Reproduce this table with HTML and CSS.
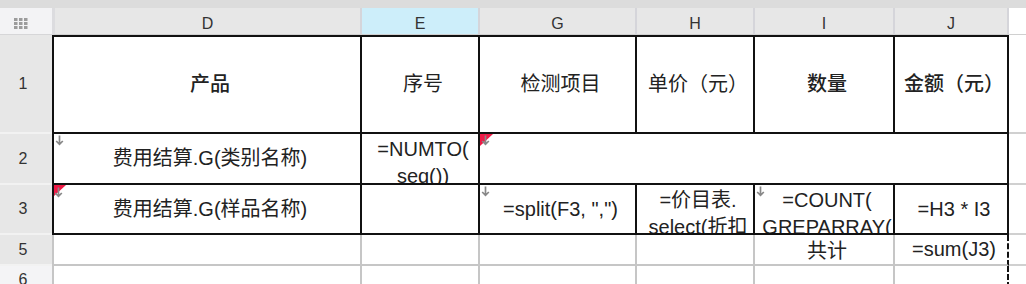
FILE: index.html
```html
<!DOCTYPE html>
<html lang="zh">
<head>
<meta charset="utf-8">
<title>Sheet</title>
<link rel="stylesheet" href="styles.css">
</head>
<body>
<div class="topbar"></div>
<div class="sheet">
  <!-- column header -->
  <div class="corner">
    <svg class="gridicon" width="14" height="11" viewBox="0 0 14 11">
      <g fill="#9c9c9c">
        <rect x="0" y="0" width="3.5" height="3"/><rect x="5" y="0" width="3.5" height="3"/><rect x="10" y="0" width="3.5" height="3"/>
        <rect x="0" y="4" width="3.5" height="3"/><rect x="5" y="4" width="3.5" height="3"/><rect x="10" y="4" width="3.5" height="3"/>
        <rect x="0" y="8" width="3.5" height="3"/><rect x="5" y="8" width="3.5" height="3"/><rect x="10" y="8" width="3.5" height="3"/>
      </g>
    </svg>
  </div>
  <div class="ch first">D</div>
  <div class="ch sel">E</div>
  <div class="ch">G</div>
  <div class="ch">H</div>
  <div class="ch">I</div>
  <div class="ch">J</div>
  <div class="ch blank"></div>

  <!-- row 1 -->
  <div class="rh">1</div>
  <div class="c l t b">产品</div>
  <div class="c t">序号</div>
  <div class="c t">检测项目</div>
  <div class="c t">单价（元）</div>
  <div class="c t b">数量</div>
  <div class="c t b">金额（元）</div>
  <div class="x"></div>

  <!-- row 2 -->
  <div class="rh">2</div>
  <div class="c l">
    <svg class="arrow a-d2" width="9" height="11" viewBox="0 0 9 11"><path d="M4.5 0.5V9.4M1.2 6L4.5 9.4L7.8 6" fill="none" stroke="#888888" stroke-width="1.7"/></svg>
    费用结算.G(类别名称)
  </div>
  <div class="c wrap"><div class="lines">=NUMTO(<br>seq())</div></div>
  <div class="c merged">
    <svg class="flag f-g2" width="13" height="12" viewBox="0 0 13 12"><polygon points="0,0 13,0 0,12" fill="#ee1a46"/></svg>
    <svg class="arrow a-g2" width="9" height="11" viewBox="0 0 9 11"><path d="M4.5 0.5V9.4M1.2 6L4.5 9.4L7.8 6" fill="none" stroke="#888888" stroke-width="1.7"/></svg>
  </div>
  <div class="x"></div>

  <!-- row 3 -->
  <div class="rh">3</div>
  <div class="c l">
    <svg class="flag f-d3" width="13" height="12" viewBox="0 0 13 12"><polygon points="0,0 13,0 0,12" fill="#ee1a46"/></svg>
    <svg class="arrow a-d3" width="9" height="11" viewBox="0 0 9 11"><path d="M4.5 0.5V9.4M1.2 6L4.5 9.4L7.8 6" fill="none" stroke="#888888" stroke-width="1.7"/></svg>
    费用结算.G(样品名称)
  </div>
  <div class="c"></div>
  <div class="c">
    <svg class="arrow a-g3" width="9" height="11" viewBox="0 0 9 11"><path d="M4.5 0.5V9.4M1.2 6L4.5 9.4L7.8 6" fill="none" stroke="#888888" stroke-width="1.7"/></svg>
    =split(F3, ",")
  </div>
  <div class="c wrap"><div class="lines">=价目表.<br>select(折扣</div></div>
  <div class="c wrap">
    <svg class="arrow a-i3" width="9" height="11" viewBox="0 0 9 11"><path d="M4.5 0.5V9.4M1.2 6L4.5 9.4L7.8 6" fill="none" stroke="#888888" stroke-width="1.7"/></svg>
    <div class="lines">=COUNT(<br>GREPARRAY(</div>
  </div>
  <div class="c">=H3 * I3</div>
  <div class="x"></div>

  <!-- row 5 -->
  <div class="rh">5</div>
  <div class="g l"></div>
  <div class="g"></div>
  <div class="g"></div>
  <div class="g"></div>
  <div class="g">共计</div>
  <div class="g pb">=sum(J3)</div>
  <div class="x"></div>

  <!-- row 6 -->
  <div class="rh off">6</div>
  <div class="g l"></div>
  <div class="g"></div>
  <div class="g"></div>
  <div class="g"></div>
  <div class="g"></div>
  <div class="g pb"></div>
  <div class="x"></div>
</div>
</body>
</html>
```

FILE: styles.css
```css
* {
  box-sizing: border-box;
  margin: 0;
  padding: 0;
}

html, body {
  width: 1026px;
  height: 284px;
  overflow: hidden;
  background: #ffffff;
}

body {
  font-family: "Liberation Sans", "Noto Sans CJK SC", sans-serif;
  color: #222222;
}

.topbar {
  height: 8px;
  background: #dcdcdc;
}

.sheet {
  display: grid;
  grid-template-columns: 52px 310px 118px 157px 118px 140px 114px 17px;
  grid-template-rows: 27px 99px 51px 50px 31px 30px;
}

/* column headers */
.corner {
  background: #f3f3f5;
  border-bottom: 1px solid #d6d6d8;
  display: flex;
  align-items: center;
  padding: 4px 0 0 14px;
}

.ch {
  background: #e7e7e7;
  border-right: 2px solid #d5d5da;
  border-bottom: 1px solid #d0d0d0;
  display: flex;
  align-items: center;
  justify-content: center;
  padding-top: 5px;
  font-size: 16px;
  color: #333333;
}

.ch.first {
  border-left: 3px solid #dcdcdf;
}

.ch.sel {
  background: #cdeefa;
}

.ch.blank {
  background: #ffffff;
  border-right: 0;
}

/* row headers */
.rh {
  background: #e7e7e7;
  border-bottom: 2px solid #f2f2f2;
  display: flex;
  align-items: center;
  justify-content: center;
  padding-right: 6px;
  font-size: 16px;
  color: #333333;
}

.rh.off {
  background: #f4f4f6;
}

/* report cells */
.c {
  position: relative;
  display: flex;
  align-items: center;
  justify-content: center;
  text-align: center;
  overflow: hidden;
  padding-left: 6px;
  font-size: 20px;
  line-height: 27px;
  white-space: nowrap;
  background: #ffffff;
  border-right: 2px solid #111111;
  border-bottom: 2px solid #111111;
}

.c.l {
  border-left: 2px solid #111111;
}

.c.t {
  border-top: 2px solid #111111;
}

.c.b {
  font-weight: 500;
}

.c.wrap {
  align-items: flex-start;
  padding-top: 2px;
}

.c.merged {
  grid-column: span 4;
}

.lines {
  width: 100%;
  text-align: center;
  white-space: nowrap;
  overflow: hidden;
}

/* empty grid cells */
.g {
  display: flex;
  align-items: center;
  justify-content: center;
  padding-left: 6px;
  font-size: 20px;
  white-space: nowrap;
  background: #ffffff;
  border-right: 2px solid #c6c6c6;
  border-bottom: 2px solid #c6c6c6;
}

.g.l {
  border-left: 2px solid #c6c6c6;
}

.g.pb {
  border-right: 2px dashed #111111;
}

.x {
  background: #ffffff;
  border-bottom: 2px solid #d0d0d0;
}

/* cell markers */
.arrow, .flag {
  position: absolute;
  display: block;
}

.flag.f-g2 { left: 0; top: 0; }
.flag.f-d3 { left: -1px; top: 0; }

.arrow.a-d2 { left: 1px; top: 1px; }
.arrow.a-g2 { left: 1px; top: 1px; }
.arrow.a-d3 { left: 0; top: 2px; }
.arrow.a-g3 { left: 1px; top: 1px; }
.arrow.a-i3 { left: 1px; top: 1px; }
```
